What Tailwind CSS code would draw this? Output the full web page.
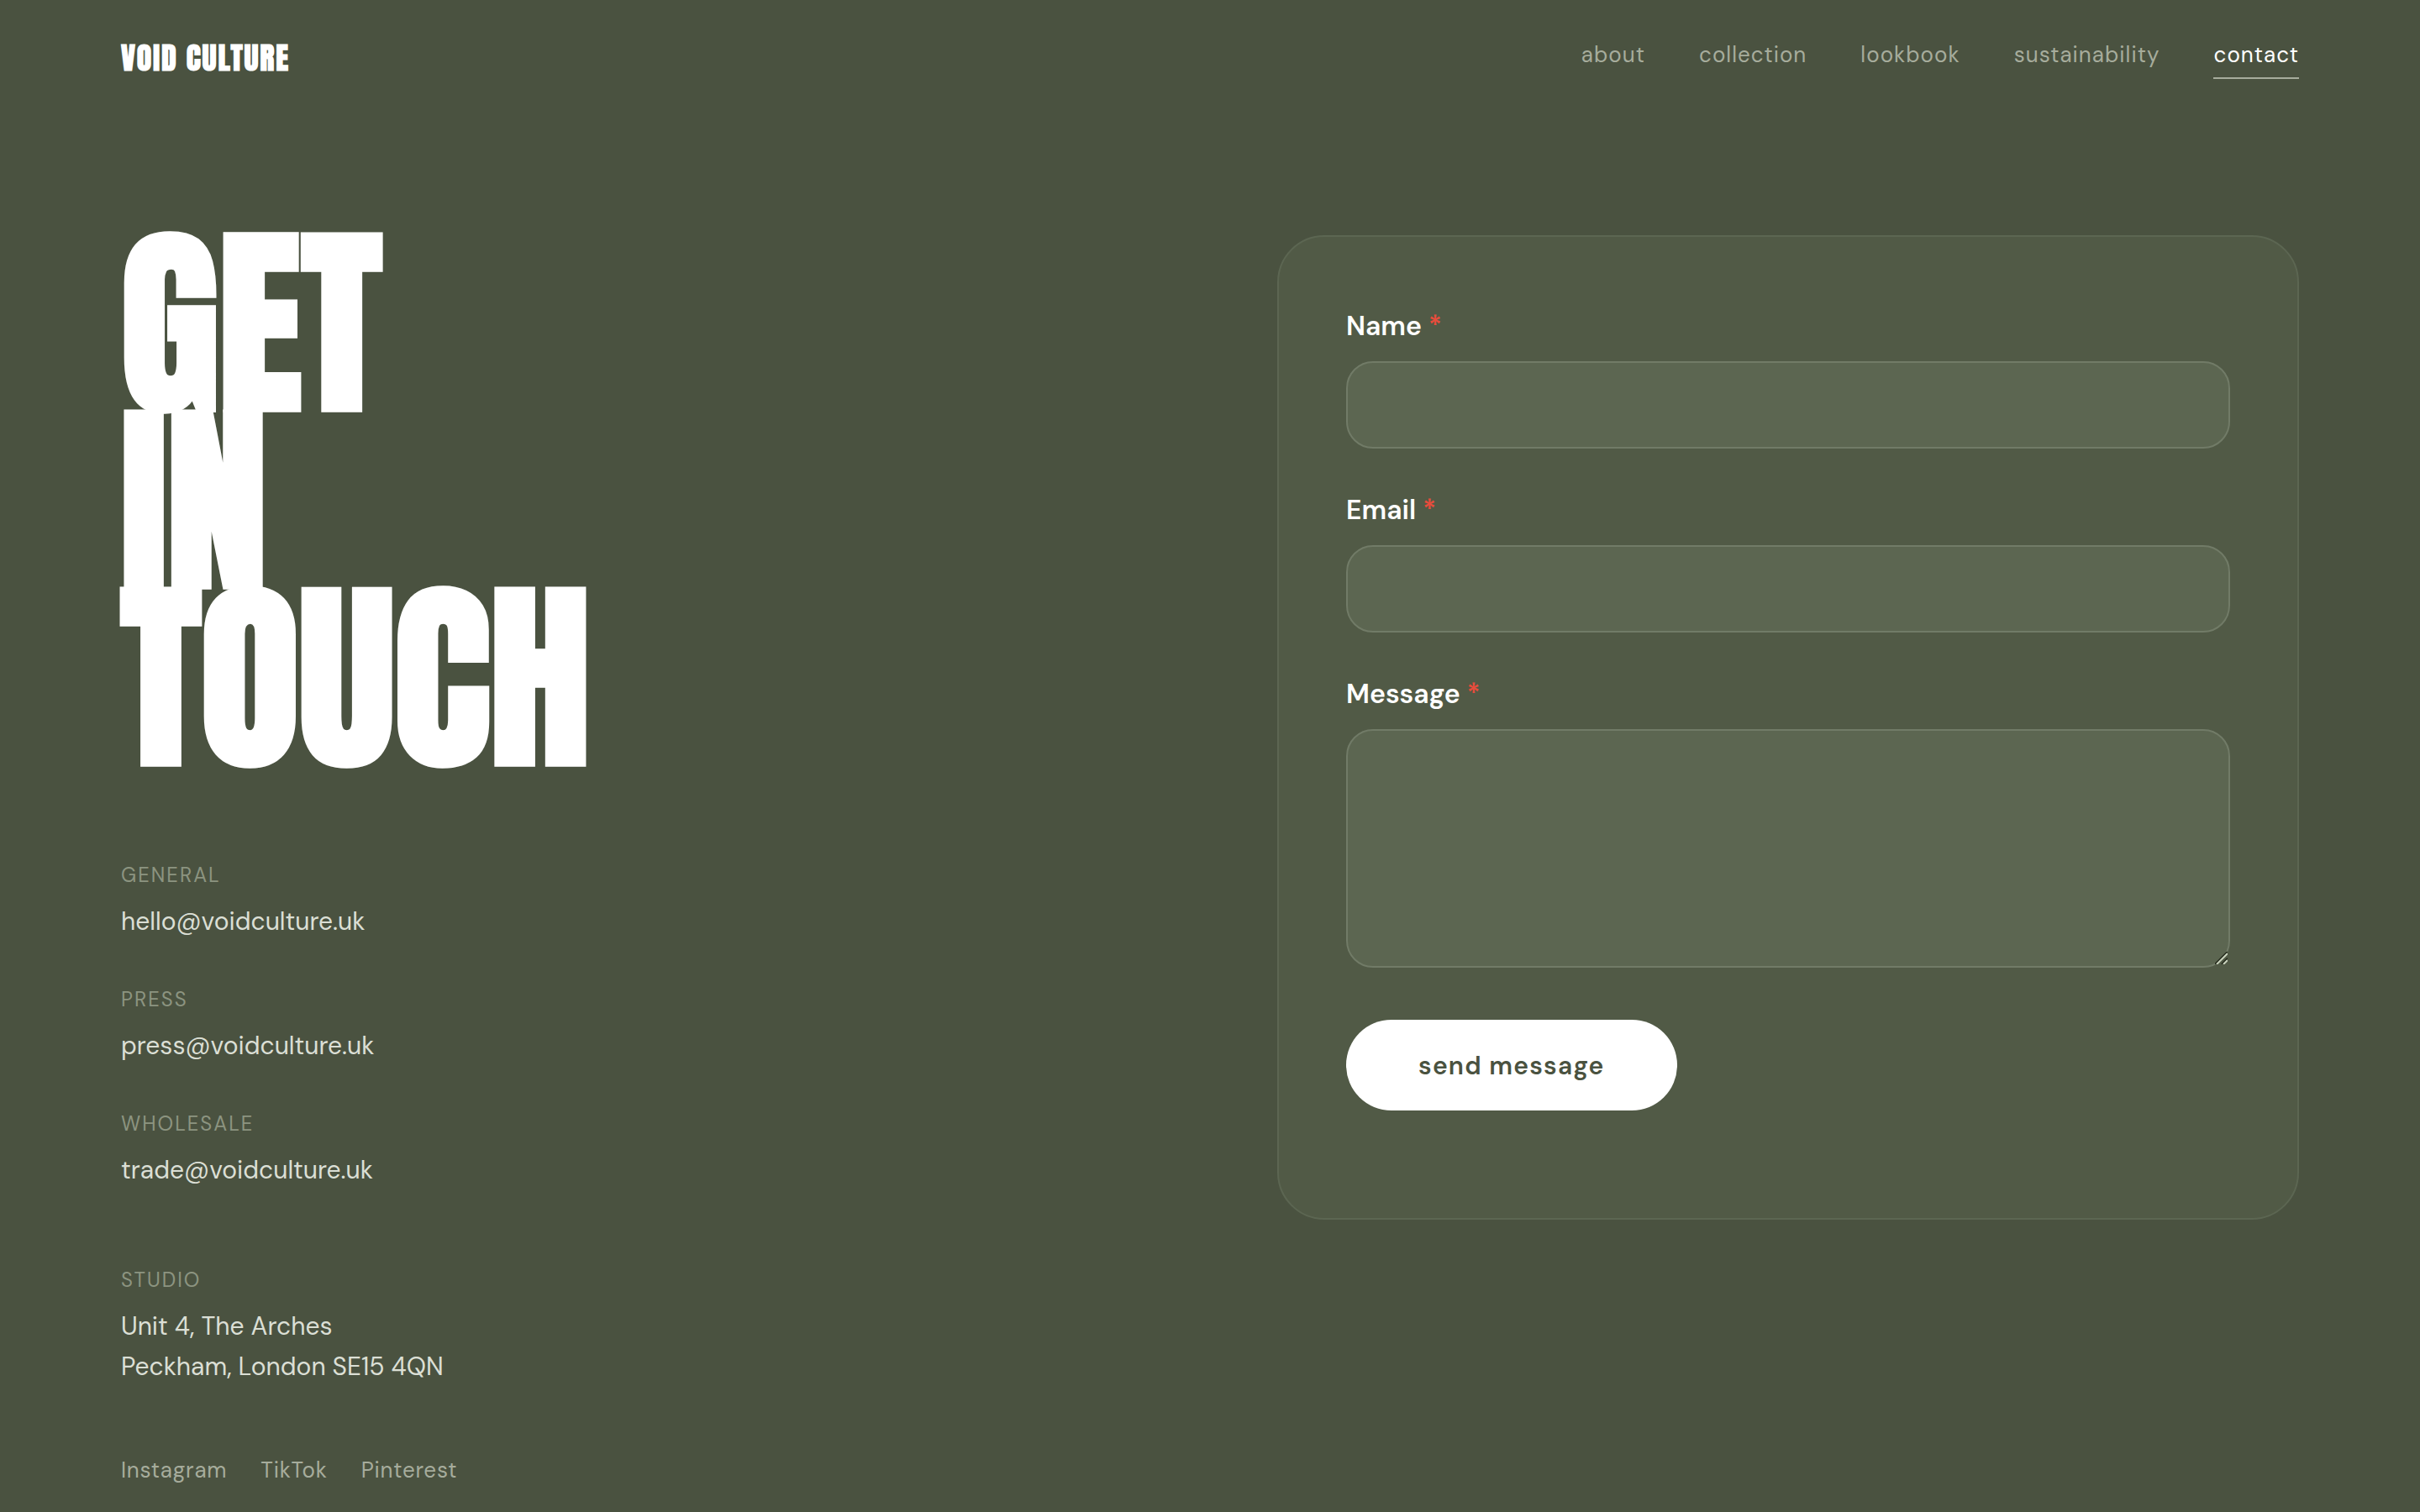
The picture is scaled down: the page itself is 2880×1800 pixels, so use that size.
<!DOCTYPE html>
<html lang="en">

<head>
  <meta charset="UTF-8">
  <meta name="viewport" content="width=device-width, initial-scale=1.0">
  <title>Void Culture - Contact</title>
  <script src="https://cdn.jsdelivr.net/npm/@tailwindcss/browser@4"></script>
</head>

<body class="min-h-screen bg-[#4a5240] font-['DM_Sans','Open_Sans',sans-serif] text-white">
  <header class="flex items-center justify-between px-[5%] pt-10">
    <a href="#" class="font-['Anton','Open_Sans',sans-serif] text-[36px] leading-[58px] font-bold tracking-[0.05em]">VOID CULTURE</a>
    <nav class="flex gap-16 text-[26px] leading-[42px] tracking-[0.04em] text-[#a6ac9c]">
      <a href="#" class="pb-2 hover:text-white">about</a>
      <a href="#" class="pb-2 hover:text-white">collection</a>
      <a href="#" class="pb-2 hover:text-white">lookbook</a>
      <a href="#" class="pb-2 hover:text-white">sustainability</a>
      <a href="#" class="border-b-2 border-[#a6ac9c] pb-1.5 text-white">contact</a>
    </nav>
  </header>

  <main class="grid grid-cols-2 items-start gap-40 px-[5%] pt-[182px] pb-20">
    <section>
      <h1 class="mb-[110px] font-['Anton','Open_Sans',sans-serif] text-[240px] leading-[211px] font-bold">GET<br>IN<br>TOUCH</h1>

      <div class="flex flex-col gap-[50px] text-[30px] leading-[48px] text-[#dbdfd5]">
        <div>
          <h2 class="mb-3 text-2xl leading-[38px] tracking-[2px] text-[#8c9480]">GENERAL</h2>
          <a href="#" class="block">hello@voidculture.uk</a>
        </div>
        <div>
          <h2 class="mb-3 text-2xl leading-[38px] tracking-[2px] text-[#8c9480]">PRESS</h2>
          <a href="#" class="block">press@voidculture.uk</a>
        </div>
        <div>
          <h2 class="mb-3 text-2xl leading-[38px] tracking-[2px] text-[#8c9480]">WHOLESALE</h2>
          <a href="#" class="block">trade@voidculture.uk</a>
        </div>
        <div class="mt-[38px]">
          <h2 class="mb-3 text-2xl leading-[38px] tracking-[2px] text-[#8c9480]">STUDIO</h2>
          <p>Unit 4, The Arches<br>Peckham, London SE15 4QN</p>
        </div>
      </div>

      <div class="mt-[78px] flex gap-10 text-[26px] leading-[42px] tracking-[0.03em] text-[#a6ac9c]">
        <a href="#" class="hover:text-white">Instagram</a>
        <a href="#" class="hover:text-white">TikTok</a>
        <a href="#" class="hover:text-white">Pinterest</a>
      </div>
    </section>

    <form class="rounded-[56px] border-2 border-[#5c6652] bg-[#515a46] px-20 pt-20 pb-32">
      <div class="mb-[47px]">
        <label for="name" class="mb-4 block text-[32px] leading-[52px] font-semibold">Name <span class="text-[#e74c3c]">*</span></label>
        <input type="text" id="name" required class="block h-[104px] w-full rounded-[32px] border-2 border-[#717b67] bg-[#5c6651] px-10 text-[30px] focus:border-white/40 focus:outline-none">
      </div>
      <div class="mb-[47px]">
        <label for="email" class="mb-4 block text-[32px] leading-[52px] font-semibold">Email <span class="text-[#e74c3c]">*</span></label>
        <input type="email" id="email" required class="block h-[104px] w-full rounded-[32px] border-2 border-[#717b67] bg-[#5c6651] px-10 text-[30px] focus:border-white/40 focus:outline-none">
      </div>
      <div class="relative mb-[62px]">
        <label for="message" class="mb-4 block text-[32px] leading-[52px] font-semibold">Message <span class="text-[#e74c3c]">*</span></label>
        <textarea id="message" required class="block h-[284px] w-full resize-y rounded-[32px] border-2 border-[#717b67] bg-[#5c6651] px-10 py-8 text-[30px] focus:border-white/40 focus:outline-none [&::-webkit-resizer]:bg-transparent"></textarea>
        <!-- resize grip -->
        <svg class="pointer-events-none absolute right-[3px] bottom-1 size-[15px]" viewBox="0 0 15 15" fill="none" stroke-width="2">
          <path d="M0 15L15 0M8 15L15 8" stroke="#23291b" />
          <path d="M2 15L15 2M10 15L15 10" stroke="#c9d2bd" />
        </svg>
      </div>
      <button type="submit" class="block h-[108px] rounded-full bg-white px-[86px] text-[30px] font-semibold tracking-[0.04em] text-[#4a5240]">send message</button>
    </form>
  </main>
</body>

</html>
